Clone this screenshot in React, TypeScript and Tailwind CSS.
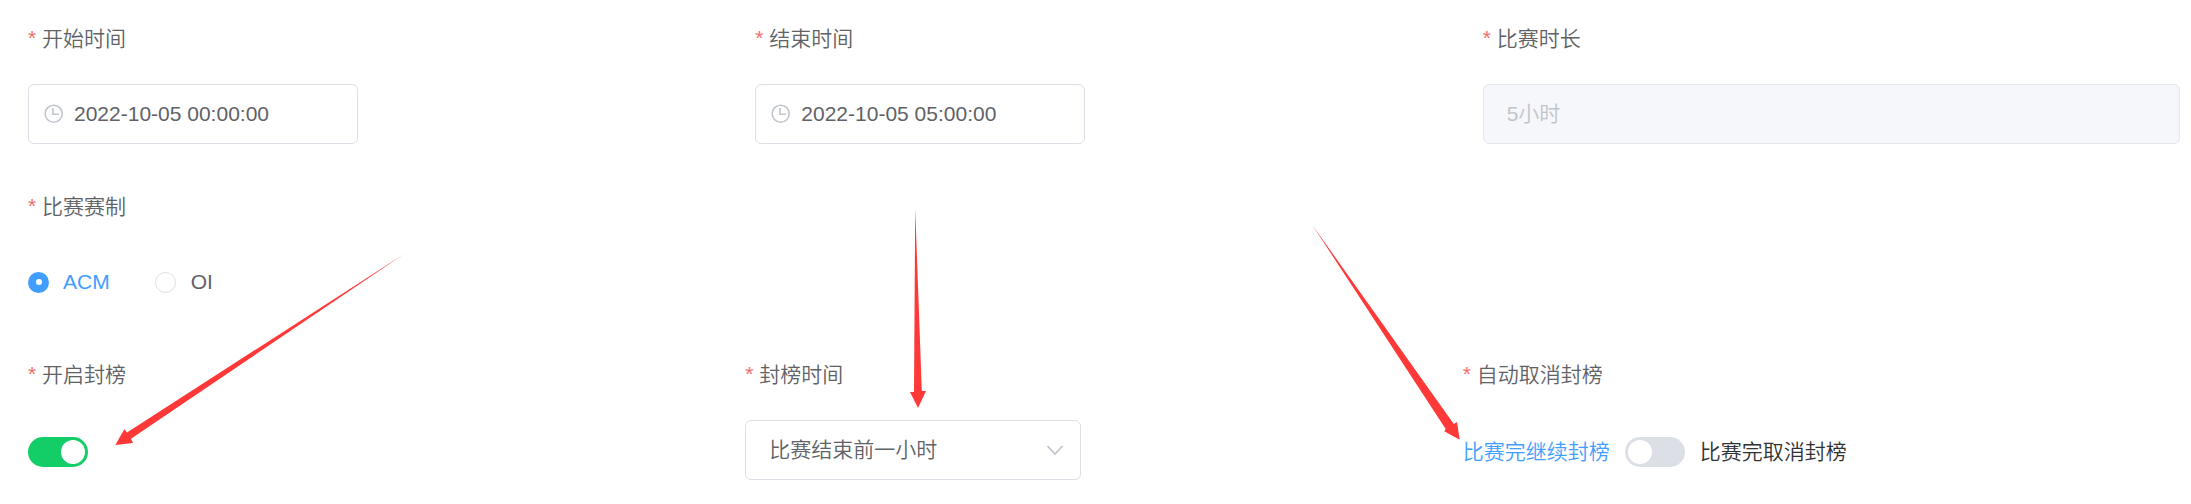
import type { ReactNode } from "react";

function Field({ label, children }: { label: string; children?: ReactNode }) {
  return (
    <div className="h-[168px] min-w-0 flex-1">
      <div className="flex h-[60px] items-center pb-px leading-[60px] text-[#606266]">
        <span className="mt-[-2px] mr-[6px] w-[8px] text-[#f56c6c]">*</span>
        <span>{label}</span>
      </div>
      <div className="mt-[15px] flex h-[60px] items-center">{children}</div>
    </div>
  );
}

function DateInput({ value }: { value: string }) {
  return (
    <div className="flex h-[60px] w-[330px] items-center rounded-[6px] border border-[#dcdfe6] pl-[14px] text-[#606266]">
      <svg className="mt-[-2px] mr-[10px] h-[21px] w-[21px]" viewBox="0 0 21 21" fill="none" stroke="#c0c4cc" strokeWidth="1.6">
        <circle cx="10.7" cy="10.7" r="8.5" />
        <path d="M9.9 5v6.2h6" />
      </svg>
      <span>{value}</span>
    </div>
  );
}

function Switch({ on }: { on: boolean }) {
  return on ? (
    <span className="mt-[3px] flex h-[30px] w-[60px] items-center justify-end rounded-full bg-[#13ce66] p-[3px]">
      <span className="h-6 w-6 rounded-full bg-white" />
    </span>
  ) : (
    <span className="mt-[3px] flex h-[30px] w-[60px] items-center rounded-full bg-[#dcdfe6] p-[3px]">
      <span className="h-6 w-6 rounded-full bg-white" />
    </span>
  );
}

export default function App() {
  return (
    <main className="relative h-[504px] w-[2191px] overflow-hidden bg-white pl-[28px] pt-[9px] font-['Liberation_Sans','Noto_Sans_CJK_SC',sans-serif] text-[21px] font-[350] whitespace-nowrap">
      <div className="flex w-[2152px] gap-[30px]">
        <Field label="开始时间"><DateInput value="2022-10-05 00:00:00" /></Field>
        <Field label="结束时间"><DateInput value="2022-10-05 05:00:00" /></Field>
        <Field label="比赛时长">
          <div className="flex h-[60px] w-full items-center rounded-[6px] border border-[#e4e7ed] bg-[#f5f7fa] pl-[23px] text-[#c0c4cc]">5小时</div>
        </Field>
      </div>
      <div className="flex">
        <Field label="比赛赛制">
          <div className="flex items-center text-[#409eff]">
            <span className="mr-[14px] flex h-[21px] w-[21px] items-center justify-center rounded-full bg-[#409eff]">
              <span className="h-[6px] w-[6px] rounded-full bg-white" />
            </span>
            <span>ACM</span>
          </div>
          <div className="ml-[45px] flex items-center text-[#606266]">
            <span className="mr-[15px] h-[21px] w-[21px] rounded-full border border-[#dcdfe6]" />
            <span>OI</span>
          </div>
        </Field>
      </div>
      <div className="flex w-[2152px]">
        <Field label="开启封榜"><Switch on={true} /></Field>
        <Field label="封榜时间">
          <div className="flex h-[60px] w-[336px] items-center justify-between rounded-[6px] border border-[#dcdfe6] pl-[23px] pr-[16px] text-[#606266]">
            <span>比赛结束前一小时</span>
            <svg className="h-[20px] w-[18px]" viewBox="0 0 18 20" fill="none" stroke="#c0c4cc" strokeWidth="1.7">
              <path d="M1.5 6l7.5 8 7.5-8" />
            </svg>
          </div>
        </Field>
        <Field label="自动取消封榜">
          <span className="mt-[3px] mr-[15px] text-[#409eff]">比赛完继续封榜</span>
          <Switch on={false} />
          <span className="mt-[3px] ml-[15px] text-[#303133]">比赛完取消封榜</span>
        </Field>
      </div>
      <svg className="pointer-events-none absolute inset-0" width="2191" height="504" viewBox="0 0 2191 504" fill="#ff3838">
        <path d="M404 254L127 432.5 124.3 429.3 115.3 445 133 443 131 438.7z" />
        <path d="M915.2 208L914 392H910L918 408 926 391H921.8z" />
        <path d="M1312.5 225.3L1445.7 429 1444.3 431.2 1459.7 439.7 1457 422 1453.8 424z" />
      </svg>
    </main>
  );
}
